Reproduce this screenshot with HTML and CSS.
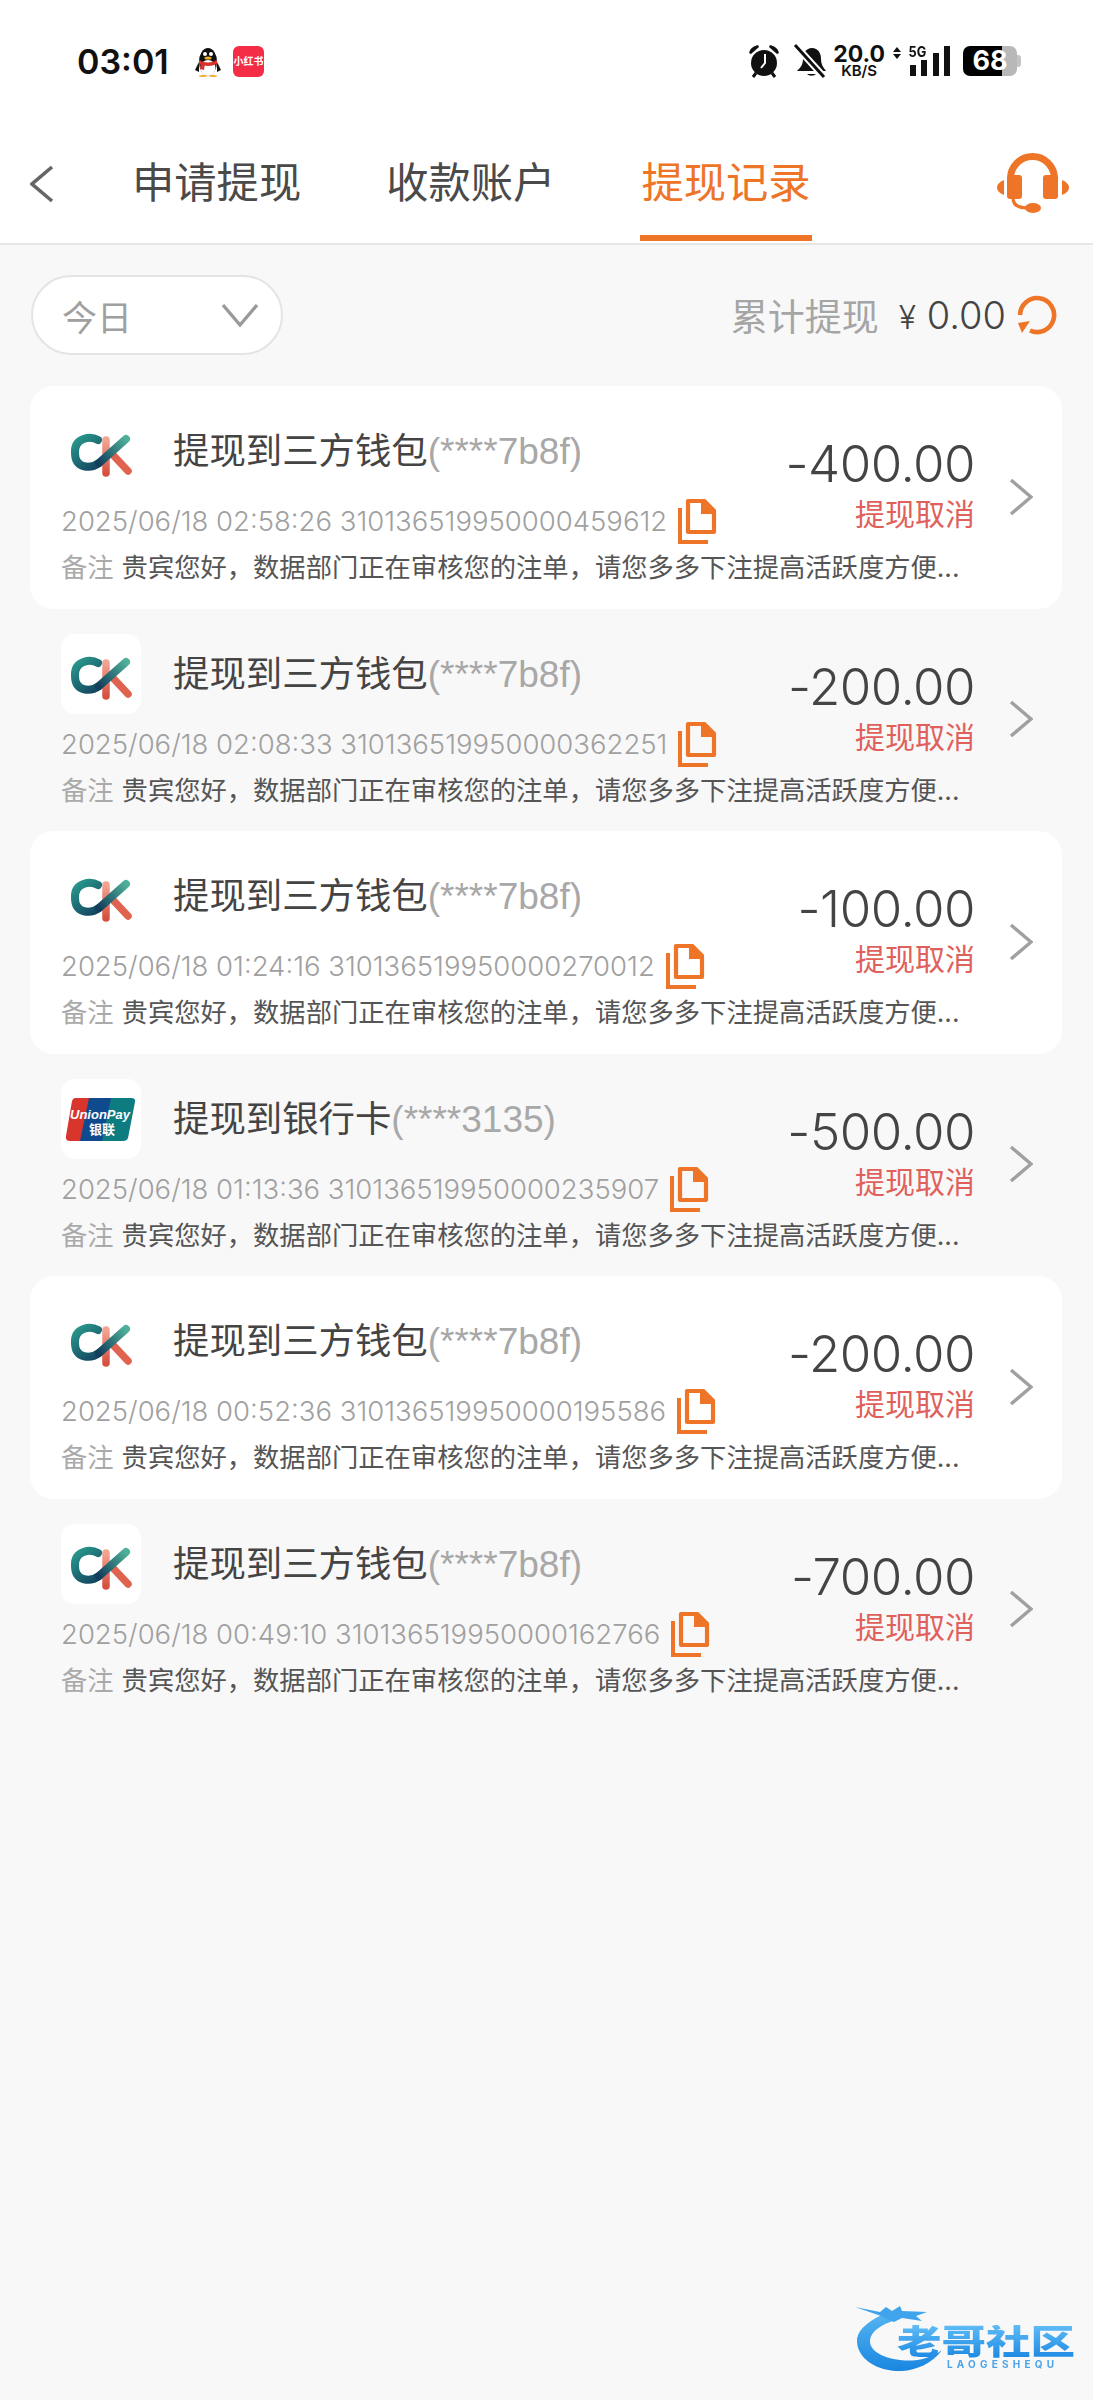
FILE: index.html
```html
<!DOCTYPE html>
<html>
    <head>
        <meta charset="utf-8">
        <title>提现记录</title>
        <link rel="stylesheet" href="styles.css">
    </head>
    <body>
        <svg class="defs" width="0" height="0">
            <defs>
                <linearGradient id="ckc" gradientUnits="userSpaceOnUse" x1="14" y1="25" x2="40" y2="58">
                    <stop offset="0" stop-color="#2a9c8e"/>
                    <stop offset="1" stop-color="#123e5c"/>
                </linearGradient>
                <linearGradient id="ckd" gradientUnits="userSpaceOnUse" x1="38" y1="52" x2="65" y2="28">
                    <stop offset="0" stop-color="#123e5c"/>
                    <stop offset="1" stop-color="#4fb09a"/>
                </linearGradient>
                <linearGradient id="ckv" gradientUnits="userSpaceOnUse" x1="45" y1="29" x2="45" y2="62">
                    <stop offset="0" stop-color="#f2a493"/>
                    <stop offset="1" stop-color="#d6503f"/>
                </linearGradient>
                <linearGradient id="wm" x1="0" y1="0" x2="0" y2="1">
                    <stop offset="0" stop-color="#55b4f2"/>
                    <stop offset="1" stop-color="#1a86e0"/>
                </linearGradient>
                <symbol id="ck" viewBox="0 0 80 80">
                    <line x1="45" y1="29" x2="45" y2="62" stroke="url(#ckv)" stroke-width="7.5" stroke-linecap="round"/>
                    <line x1="52" y1="44" x2="67" y2="60" stroke="#e0634f" stroke-width="7.5" stroke-linecap="round"/>
                    <path d="M37 29C30 25 13 26 14 42C14 58 30 58 38 52" fill="none" stroke="url(#ckc)" stroke-width="8" stroke-linecap="round"/>
                    <line x1="38" y1="52" x2="65" y2="28" stroke="url(#ckd)" stroke-width="8" stroke-linecap="round"/>
                </symbol>
                <symbol id="copy" viewBox="0 0 40 48">
                    <path d="M3 11V45H31" fill="none" stroke="#ee7427" stroke-width="4"/>
                    <path d="M11 4H27L37 14V35H11Z" fill="none" stroke="#ee7427" stroke-width="4.2" stroke-linejoin="round"/>
                    <path d="M24 2H28L39 13V17H24Z" fill="#ee7427"/>
                </symbol>
                <symbol id="arrow" viewBox="0 0 24 38">
                    <path d="M2 2L22 19L2 36" fill="none" stroke="#a0a0a0" stroke-width="3.4"/>
                </symbol>
            </defs>
        </svg>

        <div class="top">
            <div class="status">
                <span class="time">03:01</span>
                <svg class="qq" viewBox="0 0 28 32">
                    <ellipse cx="14" cy="17" rx="9" ry="14" fill="#111"/>
                    <ellipse cx="14" cy="23" rx="7.5" ry="8" fill="#fff"/>
                    <path d="M5 15Q14 20 23 15L23 19Q14 23 5 19Z" fill="#d9312b"/>
                    <path d="M7 18L11 18L10 25L6 24Z" fill="#d9312b"/>
                    <path d="M5 17L1 25L5 27ZM23 17L27 25L23 27Z" fill="#111"/>
                    <circle cx="11" cy="9" r="2" fill="#fff"/>
                    <circle cx="17" cy="9" r="2" fill="#fff"/>
                    <ellipse cx="14" cy="13" rx="3.5" ry="1.5" fill="#efb12b"/>
                    <ellipse cx="9" cy="31" rx="4" ry="1" fill="#efb12b"/>
                    <ellipse cx="19" cy="31" rx="4" ry="1" fill="#efb12b"/>
                </svg>
                <span class="red-app">小红书</span>
                <span class="grow"></span>
                <svg class="st-ico alarm" viewBox="0 0 34 34">
                    <circle cx="17" cy="19" r="13" fill="#111"/>
                    <path d="M18 10V19L14 24" fill="none" stroke="#fff" stroke-width="2"/>
                    <path d="M2 9Q3 3 11 1L12 3L4 10ZM32 9Q31 3 23 1L22 3L30 10Z" fill="#111"/>
                    <path d="M9 29L6 33M25 29L28 33" stroke="#111" stroke-width="3"/>
                </svg>
                <svg class="st-ico bell" viewBox="0 0 34 34">
                    <path d="M19 4C25 4 28 9 28 15C28 21 31 24 33 27H4C7 24 10 21 10 15C10 9 13 4 19 4Z" fill="#111"/>
                    <path d="M14 30H23A5 3 0 0 1 14 30Z" fill="#111"/>
                    <path d="M1 0L32 34" stroke="#fff" stroke-width="7"/>
                    <path d="M2 1L31 33" stroke="#111" stroke-width="3"/>
                </svg>
                <span class="speed"><b>20.0</b><i>KB/S</i></span>
                <svg class="updown" viewBox="0 0 8 12"><path d="M4 0L8 5H0ZM4 12L0 7H8Z" fill="#111"/></svg>
                <span class="bars"><b>5G</b><i class="b1"></i><i class="b2"></i><i class="b3"></i><i class="b4"></i></span>
                <span class="battery"><b>68</b></span>
            </div>
            <div class="tabs">
                <svg class="back" viewBox="0 0 24 38"><path d="M22 2L2 19L22 36" fill="none" stroke="#666" stroke-width="3.6"/></svg>
                <span class="tab first">申请提现</span>
                <span class="tab">收款账户</span>
                <span class="tab active">提现记录</span>
                <svg class="headset" viewBox="0 0 72 66">
                    <path d="M13.5 34V28.5a22 22 0 0 1 44 0V34" fill="none" stroke="#ee7427" stroke-width="7"/>
                    <rect x="10" y="25" width="15" height="24" rx="3" fill="#ee7427"/>
                    <rect x="46" y="25" width="15" height="24" rx="3" fill="#ee7427"/>
                    <path d="M7 30V45Q0 42 0 37.5Q0 33 7 30ZM65 30V45Q72 42 72 37.5Q72 33 65 30Z" fill="#ee7427"/>
                    <path d="M16 49Q17 58 30 58H36" fill="none" stroke="#ee7427" stroke-width="3.2"/>
                    <ellipse cx="36" cy="58" rx="8" ry="5" fill="#ee7427"/>
                </svg>
            </div>
        </div>

        <div class="filter">
            <div class="pill">
                <span>今日</span>
                <svg class="pill-arrow" viewBox="0 0 38 26"><path d="M2 3L19 23L36 3" fill="none" stroke="#999" stroke-width="3.4"/></svg>
            </div>
            <div class="total">
                <span class="total-label">累计提现</span>
                <span class="total-val"><em>¥</em> 0.00</span>
                <svg class="refresh" viewBox="0 0 42 42">
                    <path d="M4.1 21A17 17 0 1 1 14 36.5" fill="none" stroke="#ee7427" stroke-width="4.6"/>
                    <path d="M2 29L14 27L6 39Z" fill="#ee7427"/>
                </svg>
            </div>
        </div>

        <div class="list">
            <div class="card white">
                <div class="head">
                    <svg class="logo"><use href="#ck"/></svg>
                    <span class="title">提现到三方钱包<span class="acct">(****7b8f)</span></span>
                </div>
                <div class="side">
                    <div class="amount">-400.00</div>
                    <div class="state">提现取消</div>
                </div>
                <svg class="go"><use href="#arrow"/></svg>
                <div class="meta">2025/06/18 02:58:26 310136519950000459612<svg class="copy"><use href="#copy"/></svg></div>
                <div class="note"><span>备注</span>贵宾您好，数据部门正在审核您的注单，请您多多下注提高活跃度方便...</div>
            </div>
            <div class="card">
                <div class="head">
                    <svg class="logo"><use href="#ck"/></svg>
                    <span class="title">提现到三方钱包<span class="acct">(****7b8f)</span></span>
                </div>
                <div class="side">
                    <div class="amount">-200.00</div>
                    <div class="state">提现取消</div>
                </div>
                <svg class="go"><use href="#arrow"/></svg>
                <div class="meta">2025/06/18 02:08:33 310136519950000362251<svg class="copy"><use href="#copy"/></svg></div>
                <div class="note"><span>备注</span>贵宾您好，数据部门正在审核您的注单，请您多多下注提高活跃度方便...</div>
            </div>
            <div class="card white">
                <div class="head">
                    <svg class="logo"><use href="#ck"/></svg>
                    <span class="title">提现到三方钱包<span class="acct">(****7b8f)</span></span>
                </div>
                <div class="side">
                    <div class="amount">-100.00</div>
                    <div class="state">提现取消</div>
                </div>
                <svg class="go"><use href="#arrow"/></svg>
                <div class="meta">2025/06/18 01:24:16 310136519950000270012<svg class="copy"><use href="#copy"/></svg></div>
                <div class="note"><span>备注</span>贵宾您好，数据部门正在审核您的注单，请您多多下注提高活跃度方便...</div>
            </div>
            <div class="card">
                <div class="head">
                    <svg class="logo" viewBox="0 0 80 80">
                        <path d="M14 19H33L24 62H9Q4 62 5 57L11 22Q12 19 14 19Z" fill="#d8352c"/>
                        <path d="M28 19H56L47 62H19Z" fill="#104a8e"/>
                        <path d="M50 19H70Q75 19 74 23L67 59Q66 62 62 62H41Z" fill="#0d7c80"/>
                        <text x="39" y="40" class="up-en">UnionPay</text>
                        <text x="41" y="55" class="up-cn">银联</text>
                    </svg>
                    <span class="title">提现到银行卡<span class="acct">(****3135)</span></span>
                </div>
                <div class="side">
                    <div class="amount">-500.00</div>
                    <div class="state">提现取消</div>
                </div>
                <svg class="go"><use href="#arrow"/></svg>
                <div class="meta">2025/06/18 01:13:36 310136519950000235907<svg class="copy"><use href="#copy"/></svg></div>
                <div class="note"><span>备注</span>贵宾您好，数据部门正在审核您的注单，请您多多下注提高活跃度方便...</div>
            </div>
            <div class="card white">
                <div class="head">
                    <svg class="logo"><use href="#ck"/></svg>
                    <span class="title">提现到三方钱包<span class="acct">(****7b8f)</span></span>
                </div>
                <div class="side">
                    <div class="amount">-200.00</div>
                    <div class="state">提现取消</div>
                </div>
                <svg class="go"><use href="#arrow"/></svg>
                <div class="meta">2025/06/18 00:52:36 310136519950000195586<svg class="copy"><use href="#copy"/></svg></div>
                <div class="note"><span>备注</span>贵宾您好，数据部门正在审核您的注单，请您多多下注提高活跃度方便...</div>
            </div>
            <div class="card">
                <div class="head">
                    <svg class="logo"><use href="#ck"/></svg>
                    <span class="title">提现到三方钱包<span class="acct">(****7b8f)</span></span>
                </div>
                <div class="side">
                    <div class="amount">-700.00</div>
                    <div class="state">提现取消</div>
                </div>
                <svg class="go"><use href="#arrow"/></svg>
                <div class="meta">2025/06/18 00:49:10 310136519950000162766<svg class="copy"><use href="#copy"/></svg></div>
                <div class="note"><span>备注</span>贵宾您好，数据部门正在审核您的注单，请您多多下注提高活跃度方便...</div>
            </div>
        </div>

        <div class="mark">
            <svg class="dragon" viewBox="0 0 92 74">
                <path d="M30 10C12 18 2 28 3 38C4 56 25 68 48 67C62 66 78 60 88 46C76 55 60 58 46 56C28 54 15 46 16 36C17 27 28 20 42 16Z" fill="url(#wm)"/>
                <path d="M1 3L26 8L32 3L38 7L46 2L48 7L73 8L62 12L68 17L48 14L40 18L27 12Z" fill="#3fa4ec"/>
            </svg>
            <div class="mark-cn">老哥社区</div>
            <div class="mark-en">LAOGESHEQU</div>
        </div>
    </body>
</html>
```

FILE: styles.css
```css
body {
    margin: 0;
    min-height: 2400px;
    position: relative;
    background-color: #f8f8f8;
    font-family: "Inter", "Noto Sans CJK SC", sans-serif;
    color: #444;
    overflow-x: hidden;
}
.defs {
    position: absolute;
}

/* status bar + tabs */
.top {
    background-color: #fff;
    border-bottom: 2px solid #e6e6e6;
    height: 243px;
}
.status {
    display: flex;
    align-items: center;
    height: 122px;
    padding: 0 76px 0 77px;
    color: #111;
}
.time {
    font-size: 34px;
    font-weight: 600;
    width: 117px;
}
.qq {
    width: 28px;
    height: 32px;
}
.red-app {
    width: 31px;
    height: 31px;
    margin-left: 11px;
    border-radius: 6px;
    background-color: #f42c46;
    color: #fff;
    font-size: 10px;
    font-weight: 700;
    line-height: 31px;
    text-align: center;
    white-space: nowrap;
    overflow: hidden;
}
.grow {
    flex: 1;
}
.st-ico {
    width: 34px;
    height: 34px;
}
.bell {
    margin-left: 12px;
}
.speed {
    width: 52px;
    margin-left: 6px;
    text-align: center;
    line-height: 1;
}
.speed b {
    display: block;
    font-size: 23px;
    font-weight: 700;
    height: 18px;
    line-height: 18px;
}
.speed i {
    display: block;
    margin-top: 1px;
    font-size: 15px;
    line-height: 13px;
    font-style: normal;
    font-weight: 600;
}
.updown {
    align-self: flex-start;
    width: 8px;
    height: 12px;
    margin: 47px 9px 0 8px;
}
.bars {
    position: relative;
    display: flex;
    align-items: flex-end;
    gap: 5.3px;
    height: 30px;
}
.bars b {
    position: absolute;
    left: -3px;
    top: -1px;
    font-size: 15px;
    line-height: 14px;
    font-weight: 700;
    transform: scaleX(.85);
}
.bars i {
    width: 6px;
    background-color: #111;
}
.bars .b1 { height: 11px; }
.bars .b2 { height: 16px; }
.bars .b3 { height: 23px; }
.bars .b4 { height: 30px; }
.battery {
    position: relative;
    width: 54px;
    height: 30px;
    margin-left: 13px;
    border-radius: 7px;
    background: linear-gradient(90deg, #000 72%, #b8b8b8 72%);
    color: #fff;
    text-align: center;
    line-height: 30px;
}
.battery b {
    font-size: 27px;
    font-weight: 700;
}
.battery::after {
    content: "";
    position: absolute;
    right: -4px;
    top: 9px;
    width: 4px;
    height: 12px;
    border-radius: 0 3px 3px 0;
    background-color: #c4c4c4;
}
.tabs {
    display: flex;
    height: 121px;
    padding-left: 30px;
    position: relative;
}
.back {
    width: 24px;
    height: 38px;
    margin-top: 43px;
}
.tab {
    font-size: 42.3px;
    line-height: 122px;
    margin-left: 81px;
    height: 113px;
    padding: 0 2px;
    color: #4a4a4a;
    white-space: nowrap;
}
.first {
    margin-left: 76px;
}
.active {
    color: #ee7427;
    border-bottom: 6px solid #ee7427;
    margin-left: 83px;
    padding: 0 1px;
}
.headset {
    position: absolute;
    right: 24px;
    top: 28px;
    width: 72px;
    height: 66px;
}

/* filter row */
.filter {
    display: flex;
    align-items: center;
    justify-content: space-between;
    height: 80px;
    margin-top: 30px;
    padding: 0 35px 0 31px;
}
.pill {
    display: flex;
    align-items: center;
    justify-content: space-between;
    box-sizing: border-box;
    width: 252px;
    height: 80px;
    padding: 0 22px 0 29px;
    border: 2px solid #e4e4e4;
    border-radius: 40px;
    background-color: #fff;
    color: #a0a0a0;
    font-size: 35px;
}
.pill-arrow {
    width: 38px;
    height: 26px;
}
.total {
    display: flex;
    align-items: center;
    font-size: 37px;
}
.total-label {
    color: #a5a5a5;
}
.total-val {
    margin-left: 20px;
    font-size: 38px;
    font-weight: 300;
    color: #444;
}
.total-val em {
    font-style: normal;
    font-size: 32px;
}
.refresh {
    width: 42px;
    height: 42px;
    margin-left: 10px;
}

/* rows */
.list {
    margin: 31px 31px 0 30px;
}
.card {
    display: grid;
    grid-template-columns: 1fr auto 58px;
    grid-template-rows: 80px 60px 34px;
    box-sizing: border-box;
    height: 222.6px;
    padding: 25px 29px 0 31px;
    border-radius: 24px;
}
.white {
    background-color: #fff;
}
.head {
    grid-column: 1;
    grid-row: 1;
    display: flex;
    align-items: flex-start;
}
.logo {
    flex: none;
    width: 80px;
    height: 80px;
    border-radius: 14px;
    background-color: #fff;
}
.title {
    margin-left: 32px;
    font-size: 36.4px;
    line-height: 80px;
    white-space: nowrap;
}
.acct {
    font-family: "Liberation Sans", sans-serif;
    font-size: 37px;
    color: #a8a8a8;
}
.side {
    grid-column: 2;
    grid-row: 1 / 3;
    display: flex;
    flex-direction: column;
    align-items: flex-end;
    white-space: nowrap;
}
.amount {
    margin-top: 23px;
    font-size: 51px;
    line-height: 60px;
    font-weight: 300;
    letter-spacing: -.5px;
}
.state {
    font-size: 30px;
    line-height: 40px;
    color: #e0605c;
}
.go {
    grid-column: 3;
    grid-row: 1 / 4;
    justify-self: end;
    align-self: center;
    width: 24px;
    height: 38px;
    margin-bottom: 3px;
}
.meta {
    grid-column: 1;
    grid-row: 2;
    display: flex;
    align-items: center;
    height: 60px;
    font-size: 27.5px;
    font-weight: 300;
    color: #a0a0a0;
    white-space: nowrap;
}
.copy {
    flex: none;
    width: 40px;
    height: 48px;
    margin-left: 10px;
}
.note {
    grid-column: 1 / 3;
    grid-row: 3;
    font-size: 26.3px;
    line-height: 34px;
    color: #555;
    white-space: nowrap;
}
.note span {
    color: #aaa;
    margin-right: 8px;
}

/* logo text */
.up-en {
    font-family: "Liberation Sans", sans-serif;
    font-size: 13px;
    font-weight: 700;
    font-style: italic;
    fill: #fff;
    text-anchor: middle;
}
.up-cn {
    font-size: 13px;
    font-weight: 700;
    fill: #fff;
    text-anchor: middle;
}

/* watermark */
.mark {
    position: absolute;
    left: 854px;
    top: 2304px;
    width: 224px;
    height: 74px;
    filter: blur(.5px);
}
.dragon {
    position: absolute;
    left: 0;
    top: 0;
    width: 92px;
    height: 74px;
}
.mark-cn {
    position: absolute;
    left: 43px;
    top: 16px;
    font-size: 44.5px;
    line-height: 44px;
    font-weight: 900;
    white-space: nowrap;
    transform: scaleY(.77);
    background: linear-gradient(#5fbcf5, #1c88e3);
    -webkit-background-clip: text;
    background-clip: text;
    color: transparent;
}
.mark-en {
    position: absolute;
    left: 93px;
    top: 54px;
    font-size: 10px;
    line-height: 12px;
    font-weight: 700;
    letter-spacing: 4.2px;
    color: #4ba5e8;
    white-space: nowrap;
}
```
